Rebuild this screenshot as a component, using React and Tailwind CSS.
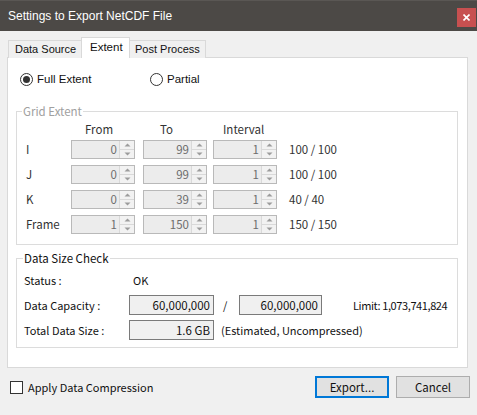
import React from "react";

const seg = "font-['Liberation_Sans',Arial,sans-serif]";
const goth = "font-['Noto_Sans_CJK_JP',sans-serif]";

function Tri({ up }) {
  return (
    <svg width="7" height="4" viewBox="0 0 7 4" className="block">
      {up ? (
        <polygon points="0.5,3.5 3.5,0.5 6.5,3.5" fill="#9c9c9c" />
      ) : (
        <polygon points="0.5,0.5 6.5,0.5 3.5,3.5" fill="#9c9c9c" />
      )}
    </svg>
  );
}

function Spin({ v }) {
  return (
    <div className="flex h-[19px] w-[64px] border border-[#b9b9b9] bg-[#ececec]">
      <div className="flex-1 pr-[2px] text-right text-[11.5px] leading-[17px] text-[#6d6d6d]">{v}</div>
      <div className="flex w-[15px] flex-col border-l border-[#d9d9d9] bg-[#f2f2f2]">
        <div className="flex flex-1 items-center justify-center border-b border-[#d9d9d9]">
          <Tri up />
        </div>
        <div className="flex flex-1 items-center justify-center">
          <Tri />
        </div>
      </div>
    </div>
  );
}

function ReadBox({ v, w }) {
  return (
    <div className={`h-[20px] ${w} whitespace-nowrap border border-[#7a7a7a] bg-[#f0f0f0] pr-[3px] text-right text-[11.5px] leading-[18px] text-[#111]`}>
      {v}
    </div>
  );
}

function Radio({ checked, label, className }) {
  return (
    <div className={`flex items-center ${className}`}>
      <div className="flex h-[13px] w-[13px] items-center justify-center rounded-full border border-[#333] bg-white">
        {checked && <div className="h-[7px] w-[7px] rounded-full bg-[#333]" />}
      </div>
      <span className={`${seg} ml-[4px] text-[11.5px] leading-[13px] text-[#111]`}>{label}</span>
    </div>
  );
}

const rows = [
  { l: "I", f: "0", t: "99", i: "1", r: "100 / 100" },
  { l: "J", f: "0", t: "99", i: "1", r: "100 / 100" },
  { l: "K", f: "0", t: "39", i: "1", r: "40 / 40" },
  { l: "Frame", f: "1", t: "150", i: "1", r: "150 / 150" },
];

export default function App() {
  return (
    <div className="flex h-[415px] w-[477px] flex-col overflow-hidden bg-[#f0f0f0]">
      {/* Title bar */}
      <div className="flex h-[31px] items-start justify-between border-t border-[#5a5754] bg-[#4c4946]">
        <span className={`${seg} ml-[8px] mt-[7px] text-[12px] leading-[16px] text-white`}>
          Settings to Export NetCDF File
        </span>
        <div className="mr-[1px] mt-[7px] flex h-[19px] w-[19px] items-center justify-center bg-[#c75050]">
          <svg width="7" height="7" viewBox="0 0 7 7">
            <path d="M0.5 0.5 L6.5 6.5 M6.5 0.5 L0.5 6.5" stroke="#ffffff" strokeWidth="1.6" />
          </svg>
        </div>
      </div>

      {/* Tabs */}
      <div className="px-[7px] pt-[6px]">
        <div className="relative z-10 -mb-px flex h-[21px] items-end pl-[1px]">
          <div className={`${seg} h-[18px] w-[74px] whitespace-nowrap border border-b-0 border-[#d9d9d9] bg-[#f0f0f0] pl-[6px] text-[11px] leading-[17px] text-[#111]`}>
            Data Source
          </div>
          <div className={`${seg} -ml-px h-[21px] w-[49px] whitespace-nowrap border border-b-0 border-[#d9d9d9] bg-white pl-[8px] text-[11.5px] leading-[18px] text-[#111]`}>
            Extent
          </div>
          <div className={`${seg} -ml-px h-[18px] w-[77px] whitespace-nowrap border border-b-0 border-[#d9d9d9] bg-[#f0f0f0] pl-[5px] text-[11px] leading-[17px] text-[#111]`}>
            Post Process
          </div>
        </div>

        {/* Panel */}
        <div className="h-[311px] w-[461px] border border-[#d9d9d9] bg-white px-[8px]">
          <div className="mt-[15px] flex h-[13px] items-center pl-[4px]">
            <Radio checked label="Full Extent" className="w-[130px]" />
            <Radio label="Partial" />
          </div>

          {/* Grid Extent */}
          <div className={`${goth} relative mt-[25px] w-[442px] border border-[#dcdcdc] pb-[10px] pl-[9px] pt-[10px]`}>
            <span className="absolute -top-[9px] left-[5px] bg-white px-[1px] text-[11.5px] leading-[16px] text-[#a0a0a0]">
              Grid Extent
            </span>
            <div className="flex h-[14px] text-[11.5px] leading-[14px] text-[#333]">
              <div className="w-[45px]" />
              <div className="w-[72px] pl-[14px]">From</div>
              <div className="w-[70px] pl-[17px]">To</div>
              <div className="pl-[10px]">Interval</div>
            </div>
            <div className="mt-[4px] flex flex-col gap-[6px]">
              {rows.map((r) => (
                <div key={r.l} className="flex h-[19px] items-center text-[11.5px] text-[#333]">
                  <div className="w-[45px] leading-[19px]">{r.l}</div>
                  <Spin v={r.f} />
                  <div className="w-[8px]" />
                  <Spin v={r.t} />
                  <div className="w-[6px]" />
                  <Spin v={r.i} />
                  <div className="ml-[12px] whitespace-nowrap leading-[19px]">{r.r}</div>
                </div>
              ))}
            </div>
          </div>

          {/* Data Size Check */}
          <div className={`${goth} relative mt-[13px] w-[442px] border border-[#dcdcdc] pb-[7px] pl-[7px] pt-[11px] text-[11px] text-[#111]`}>
            <span className="absolute -top-[9px] left-[6px] bg-white px-[1px] text-[11.5px] leading-[16px] text-[#111]">
              Data Size Check
            </span>
            <div className="flex h-[20px] items-center leading-[20px]">
              <div className="w-[105px]">Status :</div>
              <div className="pl-[4px]">OK</div>
            </div>
            <div className="mt-[5px] flex h-[20px] items-center whitespace-nowrap leading-[20px]">
              <div className="w-[105px]">Data Capacity :</div>
              <ReadBox v="60,000,000" w="w-[85px]" />
              <div className="w-[25px] pl-[9px]">/</div>
              <ReadBox v="60,000,000" w="w-[83px]" />
              <div className="ml-[31px] tracking-[-0.4px]">Limit: 1,073,741,824</div>
            </div>
            <div className="mt-[5px] flex h-[20px] items-center whitespace-nowrap leading-[20px]">
              <div className="w-[105px]">Total Data Size :</div>
              <ReadBox v="1.6 GB" w="w-[85px]" />
              <div className="ml-[7px]">(Estimated, Uncompressed)</div>
            </div>
          </div>
        </div>
      </div>

      {/* Bottom */}
      <div className={`${goth} mt-[8px] flex h-[22px] items-center pl-[10px] pr-[7px] text-[11px] text-[#111]`}>
        <div className="h-[13px] w-[13px] border border-[#333] bg-white" />
        <span className="ml-[5px] leading-[16px]">Apply Data Compression</span>
        <div className="flex-1" />
        <button className="h-[22px] w-[74px] border-2 border-[#0078d7] bg-[#e1e1e1] text-[11.5px] leading-[16px] text-[#111]">
          Export...
        </button>
        <button className="ml-[7px] h-[22px] w-[74px] border border-[#adadad] bg-[#e1e1e1] text-[11.5px] leading-[16px] text-[#111]">
          Cancel
        </button>
      </div>
    </div>
  );
}
